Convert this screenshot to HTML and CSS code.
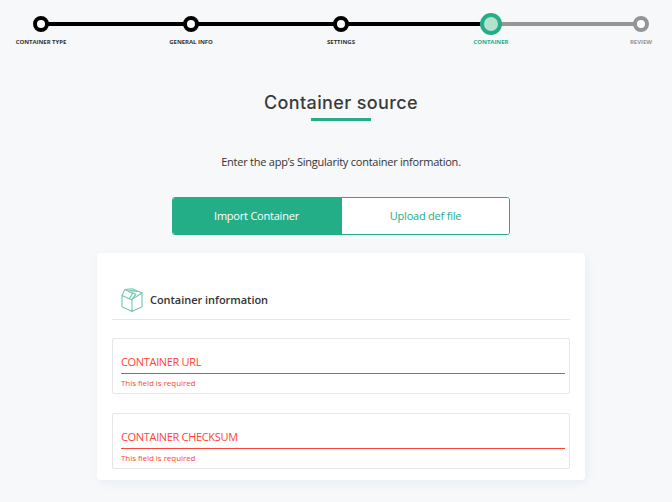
FILE: index.html
```html
<!DOCTYPE html>
<html lang="en">
<head>
<meta charset="utf-8">
<title>Container source</title>
<link rel="stylesheet" href="styles.css">
</head>
<body>
<nav class="stepper">
  <div class="track">
    <i class="dot"></i><i class="line"></i><i class="dot"></i><i class="line"></i><i class="dot"></i><i class="line"></i><i class="dot current"></i><i class="line next"></i><i class="dot todo"></i>
  </div>
  <div class="labels">
    <span class="step-label first">CONTAINER TYPE</span>
    <span class="step-label">GENERAL INFO</span>
    <span class="step-label">SETTINGS</span>
    <span class="step-label current-label">CONTAINER</span>
    <span class="step-label last">REVIEW</span>
  </div>
</nav>
<main class="content">
  <h1 class="title">Container source</h1>
  <p class="intro">Enter the app’s Singularity container information.</p>
  <div class="tabs">
    <button class="tab selected">Import Container</button>
    <button class="tab">Upload def file</button>
  </div>
  <section class="card">
    <header class="card-head">
      <svg class="box-icon" width="22" height="25" viewBox="0 0 22 25" fill="none" stroke="#74c8ab" stroke-width="1.1" stroke-linejoin="round" stroke-linecap="round">
        <path d="M1 7.4V18.8L11 23.6 21 18.8V5L11 11.4V23.6M1 7.4 11 12"/>
        <path d="M3.8 1.6 1 7.4M3.8 1.6 11 .8 21 5M3.8 1.6 11.6 5.2 8.4 10.6M11.6 5.2 15 6.2 11 11.4M6.8 3 14 2M9.4 4.2 17 3.2"/>
      </svg>
      <h2 class="card-title">Container information</h2>
    </header>
    <div class="field"><div class="input">CONTAINER URL</div><p class="error">This field is required</p></div>
    <div class="field"><div class="input">CONTAINER CHECKSUM</div><p class="error">This field is required</p></div>
  </section>
</main>
</body>
</html>
```
FILE: styles.css
```css
* { box-sizing: border-box; }
html, body { margin: 0; height: 502px; overflow: hidden; }
body { background: #f7f8fa; font-family: "Open Sans", sans-serif; color: #333; }
h1, h2, p { margin: 0; padding: 0; }

.stepper { padding-top: 12px; }
.track { display: flex; align-items: center; height: 24px; margin: 0 23px 0 33px; }
.line { flex: 1; height: 4px; margin: 0 -1px; background: #000; }
.line.next { background: #959595; }
.dot { position: relative; flex: none; width: 16px; height: 16px; border: 4px solid #000; border-radius: 50%; background: #fff; }
.dot.current { width: 22px; height: 22px; margin: 0 -3px; border-color: #24ae88; background: #b6e1cf; }
.dot.todo { border-color: #959595; }
.labels { display: grid; grid-template-columns: 82px 34px 150px 150px 150px 44px 62px; margin-top: 1px; }
.step-label { font-size: 6px; line-height: 10px; font-weight: 700; letter-spacing: -.04px; text-align: center; white-space: nowrap; color: #333; }
.first { grid-column: 1; }
.first + .step-label { grid-column: 3; }
.last { grid-column: 7; color: #959595; }
.current-label { color: #24ae88; }

.content { width: 488px; margin: 45px 0 0 97px; display: flex; flex-direction: column; align-items: center; }
.title { font: 500 18px/22px "Inter", sans-serif; letter-spacing: .38px; color: #3a3a3c; white-space: nowrap; }
.title::after { content: ""; display: block; width: 60px; height: 3px; margin: 4px auto 0; background: #24ae88; }
.intro { margin-top: 33px; font-size: 11px; line-height: 16px; font-weight: 400; letter-spacing: -.24px; white-space: nowrap; }
.tabs { display: flex; width: 338px; height: 38px; margin-top: 27px; border: 1px solid #24ae88; border-radius: 3px; overflow: hidden; }
.tab { width: 169px; flex: none; border: 0; padding: 0 2px 0 0; background: #fff; color: #24ae88; font: 400 11px/36px "Open Sans", sans-serif; letter-spacing: -.22px; }
.tab + .tab { width: 167px; padding: 0; }
.tab.selected { background: #24ae88; color: #fff; }

.card { width: 488px; height: 227px; margin-top: 18px; padding: 31px 15px 0; background: #fff; border-radius: 4px; box-shadow: 2px 3px 10px rgba(45, 130, 170, .08); }
.card-head { display: flex; align-items: center; height: 36px; padding: 0 0 4px 9px; border-bottom: 1px solid #e6e6e6; }
.box-icon { display: block; margin-top: 1px; }
.card-title { margin-left: 7px; font-size: 11px; line-height: 16px; font-weight: 600; letter-spacing: -.04px; white-space: nowrap; }
.field { height: 56px; margin-top: 18px; padding: 14px 4px 0 8px; border: 1px solid #e6e6e6; border-radius: 2px; color: #ff4338; }
.field + .field { margin-top: 19px; }
.input { height: 21px; border-bottom: 1px solid #ff4338; font-size: 11px; line-height: 18px; letter-spacing: -.33px; white-space: nowrap; }
.error { margin-top: 3px; font-size: 8px; line-height: 11px; letter-spacing: -.05px; }
```
